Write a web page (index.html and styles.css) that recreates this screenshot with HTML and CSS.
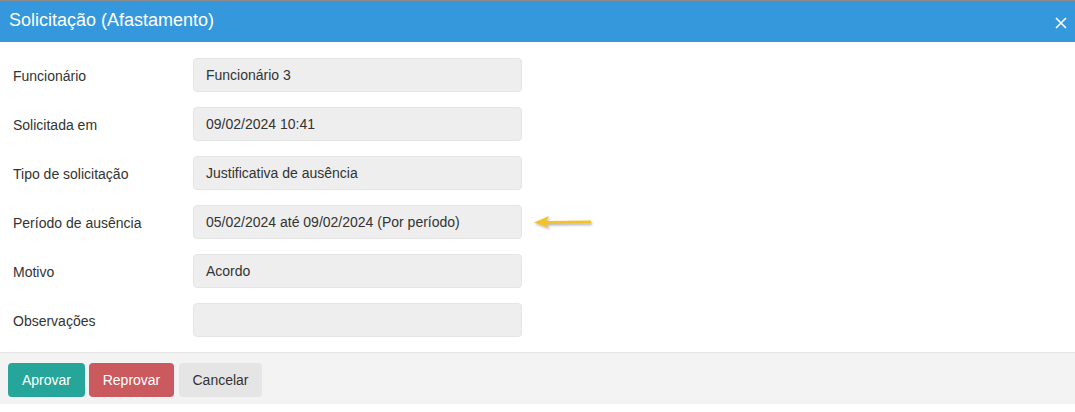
FILE: index.html
```html
<!DOCTYPE html>
<html lang="pt">
<head>
<meta charset="utf-8">
<link rel="stylesheet" href="styles.css">
</head>
<body>
<div class="modal">
  <div class="modal-header">
    <h4 class="title">Solicitação (Afastamento)</h4>
    <span class="close">
      <svg width="12" height="12" viewBox="0 0 12 12"><path d="M1 1 L11 11 M11 1 L1 11" stroke="#fff" stroke-width="1.6" fill="none"/></svg>
    </span>
  </div>
  <div class="modal-body">
    <div class="row"><label class="lbl">Funcionário</label><div class="field">Funcionário 3</div></div>
    <div class="row"><label class="lbl">Solicitada em</label><div class="field">09/02/2024 10:41</div></div>
    <div class="row"><label class="lbl">Tipo de solicitação</label><div class="field">Justificativa de ausência</div></div>
    <div class="row"><label class="lbl">Período de ausência</label><div class="field">05/02/2024 até 09/02/2024 (Por período)</div>
      <svg class="arrow" width="64" height="18" viewBox="0 0 64 18">
        <defs><filter id="sh" x="-20%" y="-50%" width="140%" height="200%"><feDropShadow dx="1" dy="1.5" stdDeviation="1" flood-color="#000" flood-opacity="0.3"/></filter></defs>
        <path filter="url(#sh)" d="M1 8.5 L16 2 L13.5 7 L58 6.5 L58 9.5 L13.5 10 L16 14 Z" fill="#f2c12e"/>
      </svg>
    </div>
    <div class="row"><label class="lbl">Motivo</label><div class="field">Acordo</div></div>
    <div class="row"><label class="lbl">Observações</label><div class="field"></div></div>
  </div>
  <div class="modal-footer">
    <button class="btn green">Aprovar</button>
    <button class="btn red">Reprovar</button>
    <button class="btn grey">Cancelar</button>
  </div>
</div>
</body>
</html>
```

FILE: styles.css
```css
html, body { margin: 0; padding: 0; background: #fff; }
body { font-family: "Liberation Sans", Arial, sans-serif; font-size: 14px; color: #333; }
.modal { width: 1075px; border-top: 1px solid #8a8a8a; }
.modal-header {
  background: #3598dc; height: 41px; display: flex; align-items: center;
  justify-content: space-between; padding: 0 8px 0 9px; box-sizing: border-box;
}
.title { margin: 0; color: #fff; font-size: 18px; font-weight: normal; position: relative; top: -1px; }
.close { display: flex; align-items: center; position: relative; top: 1px; }
.modal-body { padding: 16px 13px 0 13px; height: 310px; box-sizing: border-box; }
.row { display: flex; align-items: center; height: 34px; margin-bottom: 15px; }
.lbl { width: 180px; color: #333; padding-top: 2px; }
.field {
  width: 329px; height: 34px; box-sizing: border-box; background: #eeeeee;
  border: 1px solid #e5e5e5; border-radius: 4px; padding: 0 12px; display: flex; align-items: center; color: #333;
}
.arrow { margin-left: 11px; margin-top: 2px; }
.modal-footer {
  border-top: 1px solid #e5e5e5; background: #f3f3f3; height: 52px;
  padding: 10px 8px 0 8px; box-sizing: border-box; display: flex; align-items: flex-start; gap: 4px;
}
.btn {
  font-family: "Liberation Sans", Arial, sans-serif; font-size: 14px; height: 34px; border: none;
  border-radius: 4px; padding: 0 13px; cursor: pointer;
}
.green { background: #26a69a; color: #fff; width: 77px; }
.red { background: #cb5a5e; color: #fff; width: 85px; }
.grey { background: #e5e5e5; color: #333; width: 83px; margin-left: 1px; }
```
